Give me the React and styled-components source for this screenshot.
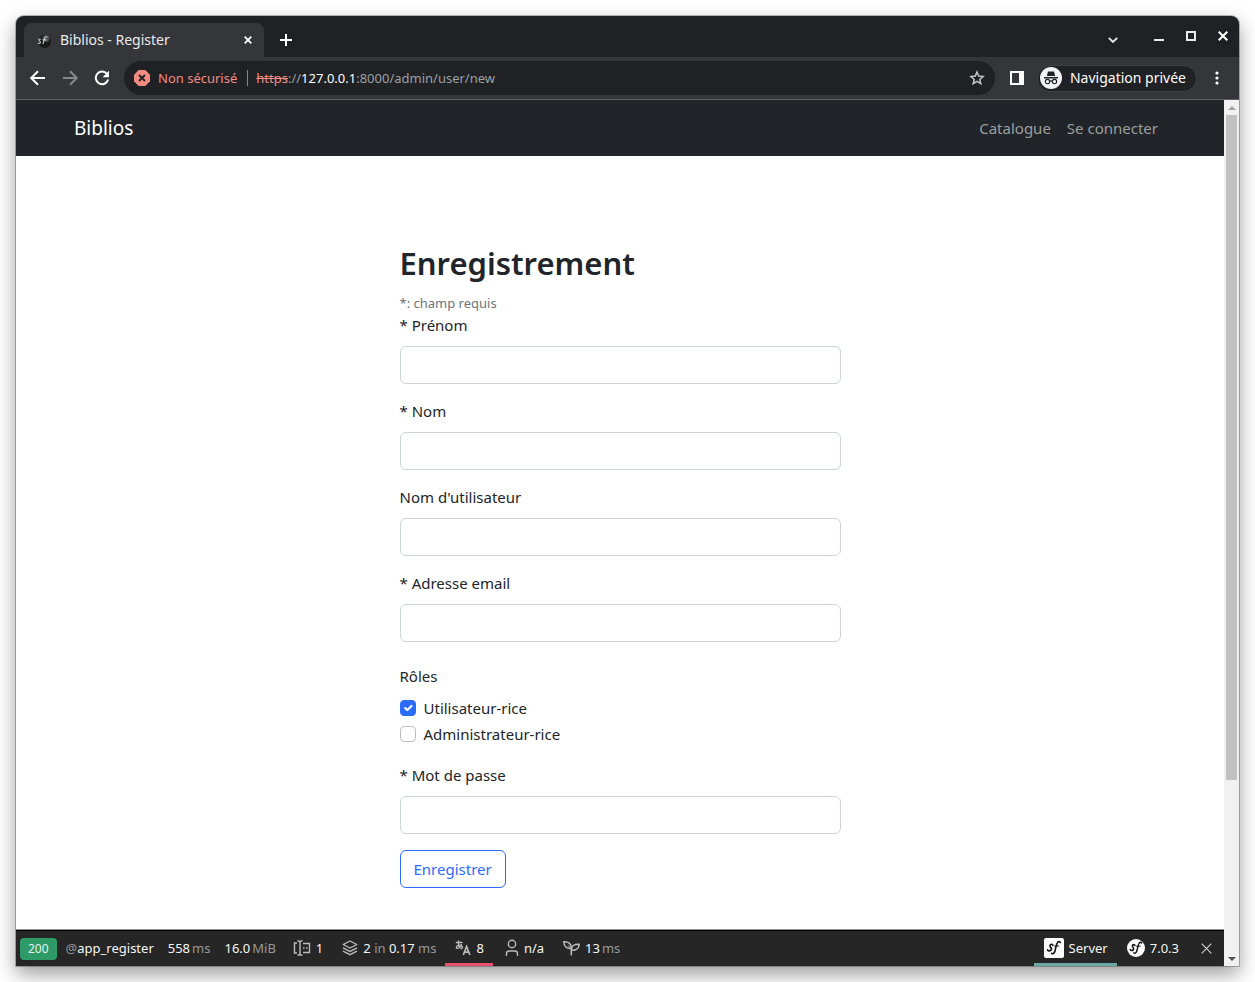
import React, { useState } from "react";
import styled, { createGlobalStyle } from "styled-components";

const fields = [
  { name: "firstname", label: "* Prénom", type: "text" },
  { name: "lastname", label: "* Nom", type: "text" },
  { name: "username", label: "Nom d'utilisateur", type: "text" },
  { name: "email", label: "* Adresse email", type: "email" },
];

const App = () => {
  const [form, setForm] = useState({
    firstname: "",
    lastname: "",
    username: "",
    email: "",
    password: "",
  });
  const [roles, setRoles] = useState({ user: true, admin: false });

  const onChange = (e) => {
    setForm({ ...form, [e.target.name]: e.target.value });
  };

  const onCheck = (e) => {
    setRoles({ ...roles, [e.target.name]: e.target.checked });
  };

  return (
    <>
      <GlobalStyle />
      <Window>
        <TabBar>
          <Tab>
            <Favicon />
            <TabTitle>Biblios - Register</TabTitle>
            <IconBtn aria-label="Fermer l'onglet" $size={16}>
              <CloseIcon size={8} width={1.8} />
            </IconBtn>
          </Tab>
          <IconBtn aria-label="Nouvel onglet" $size={28}>
            <svg width="12" height="12" viewBox="0 0 12 12">
              <path d="M6 0v12M0 6h12" stroke="#fff" strokeWidth="2" />
            </svg>
          </IconBtn>
          <WindowBtns>
            <IconBtn aria-label="Rechercher dans les onglets" $size={16}>
              <svg width="10" height="6" viewBox="0 0 10 6">
                <path d="M.8.8 5 5 9.2.8" fill="none" stroke="#e8eaed" strokeWidth="1.8" />
              </svg>
            </IconBtn>
            <IconBtn aria-label="Réduire" $size={16}>
              <svg width="10" height="10" viewBox="0 0 10 10">
                <path d="M0 9h10" stroke="#e8eaed" strokeWidth="2" />
              </svg>
            </IconBtn>
            <IconBtn aria-label="Agrandir" $size={16}>
              <svg width="10" height="10" viewBox="0 0 10 10">
                <path d="M1 1h8v8H1z" fill="none" stroke="#e8eaed" strokeWidth="2" />
              </svg>
            </IconBtn>
            <IconBtn aria-label="Fermer" $size={16}>
              <CloseIcon size={10} width={2} />
            </IconBtn>
          </WindowBtns>
        </TabBar>

        <Toolbar>
          <IconBtn aria-label="Précédent" $size={32}>
            <ArrowIcon color="#fff" />
          </IconBtn>
          <IconBtn aria-label="Suivant" $size={32}>
            <ArrowIcon color="#86888b" flip />
          </IconBtn>
          <IconBtn aria-label="Actualiser" $size={32}>
            <svg width="16" height="16" viewBox="0 0 16 16">
              <path
                d="M13.3 4.3A6.3 6.3 0 1 0 14.2 9.6"
                fill="none"
                stroke="#fff"
                strokeWidth="2"
              />
              <path d="M15 .8v6.4H8.6z" fill="#fff" />
            </svg>
          </IconBtn>
          <AddressBar>
            <svg width="16" height="16" viewBox="0 0 16 16">
              <path d="M4.7 0h6.6L16 4.7v6.6L11.3 16H4.7L0 11.3V4.7z" fill="#f28b82" />
              <path d="m5 5 6 6M11 5l-6 6" stroke="#202124" strokeWidth="1.8" />
            </svg>
            <Insecure>Non sécurisé</Insecure>
            <Url>
              <s>https</s>://<b>127.0.0.1</b>:8000/admin/user/new
            </Url>
            <IconBtn aria-label="Ajouter aux favoris" $size={16}>
              <svg width="16" height="16" viewBox="0 0 16 16">
                <path
                  d="m8 2 1.7 4.1 4.4.4-3.3 2.9 1 4.3L8 11.4l-3.8 2.3 1-4.3-3.3-2.9 4.4-.4z"
                  fill="none"
                  stroke="#c4c7c9"
                  strokeWidth="1.5"
                />
              </svg>
            </IconBtn>
          </AddressBar>
          <IconBtn aria-label="Panneau latéral" $size={16}>
            <svg width="14" height="14" viewBox="0 0 14 14">
              <path d="M0 0h14v14H0zM2 2v10h7V2z" fill="#fff" fillRule="evenodd" />
            </svg>
          </IconBtn>
          <PrivateBadge>
            <svg width="22" height="22" viewBox="0 0 22 22">
              <circle cx="11" cy="11" r="11" fill="#f1f3f4" />
              <path d="M8 4.5h6l1.2 4.5H6.8zM4 10h14v1.4H4z" fill="#202124" />
              <g fill="none" stroke="#202124" strokeWidth="1.1">
                <circle cx="7.5" cy="14.6" r="2.2" />
                <circle cx="14.5" cy="14.6" r="2.2" />
                <path d="M9.7 14.2q1.3-.7 2.6 0" />
              </g>
            </svg>
            Navigation privée
          </PrivateBadge>
          <IconBtn aria-label="Menu" $size={16}>
            <svg width="4" height="14" viewBox="0 0 4 14">
              <g fill="#fff">
                <circle cx="2" cy="2" r="1.6" />
                <circle cx="2" cy="7" r="1.6" />
                <circle cx="2" cy="12" r="1.6" />
              </g>
            </svg>
          </IconBtn>
        </Toolbar>

        <Viewport>
          <Page>
            <Navbar>
              <NavContainer>
                <Brand href="#">Biblios</Brand>
                <NavLinks>
                  <NavLink href="#">Catalogue</NavLink>
                  <NavLink href="#">Se connecter</NavLink>
                </NavLinks>
              </NavContainer>
            </Navbar>

            <Main>
              <Form onSubmit={(e) => e.preventDefault()}>
                <Title>Enregistrement</Title>
                <Hint>*: champ requis</Hint>
                {fields.map((field) => (
                  <Field key={field.name}>
                    <Label htmlFor={field.name}>{field.label}</Label>
                    <Input
                      id={field.name}
                      name={field.name}
                      type={field.type}
                      value={form[field.name]}
                      onChange={onChange}
                    />
                  </Field>
                ))}
                <Roles>
                  <Legend>Rôles</Legend>
                  <CheckLabel>
                    <Checkbox name="user" checked={roles.user} onChange={onCheck} />
                    Utilisateur-rice
                  </CheckLabel>
                  <CheckLabel>
                    <Checkbox name="admin" checked={roles.admin} onChange={onCheck} />
                    Administrateur-rice
                  </CheckLabel>
                </Roles>
                <Field>
                  <Label htmlFor="password">* Mot de passe</Label>
                  <Input
                    id="password"
                    name="password"
                    type="password"
                    value={form.password}
                    onChange={onChange}
                  />
                </Field>
                <SubmitBtn>Enregistrer</SubmitBtn>
              </Form>
            </Main>

            <DebugBar>
              <Status>200</Status>
              <DebugItem>
                <span><Dim>@</Dim>app_register</span>
              </DebugItem>
              <DebugItem>
                558<Dim>ms</Dim>
              </DebugItem>
              <DebugItem>
                16.0<Dim>MiB</Dim>
              </DebugItem>
              <DebugItem $icon>
                <FormIcon />1
              </DebugItem>
              <DebugItem $icon>
                <LayersIcon />
                <span>2 <Dim>in</Dim> 0.17 <Dim>ms</Dim></span>
              </DebugItem>
              <DebugItem $icon $line="#e8506f">
                <TranslateIcon />8
              </DebugItem>
              <DebugItem $icon>
                <UserIcon />
                n/a
              </DebugItem>
              <DebugItem $icon>
                <TwigIcon />
                <Pair>13<Dim>ms</Dim></Pair>
              </DebugItem>
              <DebugRight>
                <DebugItem $icon $line="#6aa8a5">
                  <SfIcon size={20} square />
                  Server
                </DebugItem>
                <DebugItem $icon>
                  <SfIcon size={18} />
                  7.0.3
                </DebugItem>
                <IconBtn aria-label="Fermer la barre" $size={36}>
                  <CloseIcon size={11} width={1.2} color="#ccc" />
                </IconBtn>
              </DebugRight>
            </DebugBar>
          </Page>

          <Scrollbar aria-hidden="true">
            <ScrollArrow>
              <svg width="8" height="4" viewBox="0 0 8 4">
                <path d="M4 0 8 4H0z" fill="#a3a3a3" />
              </svg>
            </ScrollArrow>
            <Thumb />
            <Track />
            <ScrollArrow>
              <svg width="8" height="4" viewBox="0 0 8 4">
                <path d="M0 0h8L4 4z" fill="#505050" />
              </svg>
            </ScrollArrow>
          </Scrollbar>
        </Viewport>
      </Window>
    </>
  );
};

const CloseIcon = ({ size, width, color = "#fff" }) => (
  <svg width={size} height={size} viewBox={`0 0 ${size} ${size}`}>
    <path
      d={`M.7.7 ${size - 0.7} ${size - 0.7}M${size - 0.7}.7.7 ${size - 0.7}`}
      stroke={color}
      strokeWidth={width}
    />
  </svg>
);

const ArrowIcon = ({ color, flip }) => (
  <svg width="16" height="16" viewBox="0 0 16 16">
    <path
      d={flip ? "M1 8h13M8 1.2 14.8 8 8 14.8" : "M15 8H2M8 1.2 1.2 8 8 14.8"}
      fill="none"
      stroke={color}
      strokeWidth="2"
    />
  </svg>
);

const Favicon = () => (
  <svg width="16" height="16" viewBox="0 0 16 16">
    <circle cx="8.5" cy="9.5" r="6.5" fill="#17181a" />
    <circle cx="10" cy="6.5" r="3.5" fill="#4b4d50" />
    <path
      d="M5 7.3c-1.6-.8-2.8.2-2 1.2.7.9 1.7 1 1.4 2.1-.3 1-1.8.9-2.5.2M6.8 12c1.4-1.5.8-6.3 2.8-7.2 1-.3 1.5.3 1.6.8M6.5 7.9h4"
      fill="none"
      stroke="#c8c8c8"
      strokeWidth="1.1"
    />
  </svg>
);

const SfIcon = ({ size, square }) => (
  <svg width={size} height={size} viewBox="0 0 20 20">
    {square ? (
      <rect width="20" height="20" rx="2" fill="#fff" />
    ) : (
      <circle cx="10" cy="10" r="10" fill="#fff" />
    )}
    <g fill="none" stroke="#111" strokeLinecap="round">
      <path
        d="M8.8 7.3c.1-1.2-1.7-1.4-2.5-.5-.9 1-.4 1.7.4 2.6.9 1 1.2 1.7.3 2.700-1 1-3.200 1-3.400-.3"
        strokeWidth="1.7"
      />
      <path
        d="M7.600 15.400c1.700 1.100 3-.6 3.600-3.200.8-3.200 1.200-6.500 2.500-7.900.9-.9 2.300-.9 2.600.2"
        strokeWidth="1.6"
      />
      <path d="M10.600 8h4.200" strokeWidth="1.1" />
    </g>
  </svg>
);

const FormIcon = () => (
  <svg width="18" height="16" viewBox="0 0 18 16" fill="none" stroke="#bbb" strokeWidth="1.4">
    <path d="M4 3H1.500v10H4M10 3.500h6.500v9H10M4.500.7q2.500 0 2.500 1.800v11q0 1.800-2.500 1.800M9.500.7Q7 .7 7 2.500v11q0 1.800 2.500 1.800" />
    <path d="M10 8h1.500M13 8h1.500" />
  </svg>
);

const LayersIcon = () => (
  <svg width="16" height="16" viewBox="0 0 16 16" fill="none" stroke="#bbb" strokeWidth="1.4">
    <path d="m8 1 6.800 3.500L8 8 1.200 4.500z" strokeLinejoin="round" />
    <path d="M1 7.800 8 11.400l7-3.600M1 11.100l7 3.600 7-3.600" />
  </svg>
);

const TranslateIcon = () => (
  <svg width="16" height="16" viewBox="0 0 16 16" fill="none" stroke="#bbb" strokeWidth="1.3">
    <path d="M.8 2.500h6.700M3.500.5c-.2 3 0 5.500.8 7.700M6.500 4.200C5.800 6.800 4 8.300 2.300 8.400.7 8.300 1 5.400 4.500 5.200c3.700-.1 3.700 3 1 3.600" />
    <path d="m8.300 15 3.300-8.500L14.900 15M9.300 12.200h4.700" strokeWidth="1.7" />
  </svg>
);

const UserIcon = () => (
  <svg width="16" height="18" viewBox="0 0 16 18" fill="none" stroke="#bbb" strokeWidth="1.4">
    <circle cx="9" cy="5" r="3.700" />
    <path d="M3.500 17v-2.300q0-2.700 2.700-2.700h5.600q2.700 0 2.700 2.700V17" />
  </svg>
);

const TwigIcon = () => (
  <svg width="17" height="16" viewBox="0 0 17 16" fill="none" stroke="#bbb" strokeWidth="1.5">
    <path d="M8.300 15.500V9M8.300 8.500C3.500 9 1 6.300.8 1.800c4.800-.3 7.500 1.700 7.500 6.700M8.300 10.300c0-4.500 2.600-6.300 7.900-6.100-.2 4.500-3.200 6.300-7.900 6.100" />
    <path d="m5 5.500 3.200 3.500" strokeWidth="1" />
  </svg>
);

const GlobalStyle = createGlobalStyle`
  * {
    box-sizing: border-box;
  }
  body {
    margin: 0;
    background: #fff;
    color: #212529;
    font-family: "Noto Sans", "Open Sans", sans-serif;
    font-size: 15px;
    line-height: 24px;
  }
  svg {
    display: block;
    flex-shrink: 0;
  }
  button, input {
    font: inherit;
  }
`;

const Window = styled.div`
  display: flex;
  flex-direction: column;
  min-height: calc(100vh - 32px);
  margin: 16px;
  border-radius: 8px 8px 0 0;
  overflow: hidden;
  background: #202124;
  box-shadow: 0 0 0 1px rgba(0, 0, 0, 0.25), 0 8px 20px rgba(0, 0, 0, 0.4);
`;

const IconBtn = styled.button`
  display: flex;
  align-items: center;
  justify-content: center;
  flex-shrink: 0;
  width: ${(props) => props.$size}px;
  height: ${(props) => props.$size}px;
  padding: 0;
  border: none;
  background: none;
  cursor: pointer;
`;

const TabBar = styled.div`
  display: flex;
  align-items: center;
  gap: 8px;
  height: 41px;
  padding: 7px 8px 0;
`;

const Tab = styled.div`
  display: flex;
  align-items: center;
  gap: 8px;
  width: 240px;
  height: 34px;
  padding: 0 8px 0 12px;
  border-radius: 8px 8px 0 0;
  background: #35363a;
`;

const TabTitle = styled.span`
  flex: 1;
  color: #e8eaed;
  font-size: 14px;
`;

const WindowBtns = styled.div`
  display: flex;
  align-items: center;
  gap: 16px;
  margin-left: auto;
  padding-bottom: 8px;

  button:first-child {
    margin: 8px 14px 0 0;
  }
`;

const Toolbar = styled.div`
  display: flex;
  align-items: center;
  height: 43px;
  padding: 0 14px 0 6px;
  border-bottom: 1px solid #5f6064;
  background: #35363a;
`;

const AddressBar = styled.div`
  display: flex;
  flex: 1;
  align-items: center;
  gap: 8px;
  height: 34px;
  margin: 0 14px 0 6px;
  padding: 0 10px;
  border-radius: 17px;
  background: #202124;
  font-size: 13px;
`;

const Insecure = styled.span`
  padding-right: 10px;
  border-right: 1px solid #80868b;
  color: #f28b82;
  line-height: 16px;
`;

const Url = styled.span`
  flex: 1;
  color: #9aa0a6;

  s {
    color: #f28b82;
  }
  b {
    color: #fff;
    font-weight: 400;
  }
`;

const PrivateBadge = styled.div`
  display: flex;
  align-items: center;
  gap: 8px;
  height: 27px;
  margin: 0 12px;
  padding: 0 10px 0 2px;
  border: 1px solid #3f4044;
  border-radius: 14px;
  background: #202124;
  color: #fff;
  font-size: 14px;
`;

const Viewport = styled.div`
  display: flex;
  flex: 1;
`;

const Page = styled.div`
  display: flex;
  flex: 1;
  flex-direction: column;
  background: #fff;
`;

const Navbar = styled.nav`
  padding: 8px 0;
  background: #212529;
`;

const NavContainer = styled.div`
  display: flex;
  align-items: center;
  justify-content: space-between;
  max-width: 1140px;
  height: 40px;
  margin: 0 auto;
  padding: 0 24px;
`;

const Brand = styled.a`
  color: #fff;
  font-size: 19px;
  text-decoration: none;
`;

const NavLinks = styled.div`
  display: flex;
  gap: 16px;
  padding: 0 8px;
`;

const NavLink = styled.a`
  color: #9b9d9f;
  text-decoration: none;
`;

const Main = styled.main`
  flex: 1;
  padding: 89px 16px 40px;
`;

const Form = styled.form`
  max-width: 441px;
  margin: 0 auto;
`;

const Title = styled.h1`
  margin: 0 0 11px;
  font-size: 31px;
  font-weight: 600;
  line-height: 36px;
`;

const Hint = styled.div`
  color: #6c757d;
  font-size: 13px;
  line-height: 22px;
`;

const Field = styled.div`
  margin-bottom: 16px;
`;

const Label = styled.label`
  display: block;
  margin-bottom: 10px;
  line-height: 22px;
`;

const Input = styled.input`
  display: block;
  width: 100%;
  height: 38px;
  padding: 6px 12px;
  border: 1px solid #ced4da;
  border-radius: 6px;
  background: #fff;
  color: #212529;
`;

const Roles = styled.fieldset`
  margin: 0 0 16px;
  padding: 0;
  border: none;
`;

const Legend = styled.legend`
  padding: 6px 0 8px;
`;

const CheckLabel = styled.label`
  display: flex;
  align-items: center;
  gap: 8px;
  margin-bottom: 2px;
`;

const Checkbox = styled.input.attrs({ type: "checkbox" })`
  width: 16px;
  height: 16px;
  margin: 0;
  appearance: none;
  border: 1px solid #bfbfbf;
  border-radius: 4px;
  background: #fff;

  &:checked {
    border-color: #2b6bff;
    background: #2b6bff
      url("data:image/svg+xml,%3csvg xmlns='http://www.w3.org/2000/svg' viewBox='0 0 20 20'%3e%3cpath fill='none' stroke='%23fff' stroke-linecap='round' stroke-linejoin='round' stroke-width='3' d='m6 10 3 3 6-6'/%3e%3c/svg%3e")
      center / contain no-repeat;
  }
`;

const SubmitBtn = styled.button`
  display: block;
  height: 38px;
  padding: 0 13px;
  border: 1px solid #2b6bff;
  border-radius: 6px;
  background: #fff;
  color: #2b6bff;
  cursor: pointer;
`;

const DebugBar = styled.div`
  display: flex;
  align-items: center;
  height: 36px;
  padding-left: 4px;
  border-top: 1px solid #000;
  box-shadow: 0 -1px #8f918f;
  background: #262626;
  color: #f5f5f5;
  font-size: 13px;
`;

const Status = styled.span`
  margin-right: 2px;
  padding: 0 8px;
  border-radius: 4px;
  background: #2e9a68;
  color: #e5f3ec;
  font-size: 12px;
  line-height: 22px;
`;

const DebugItem = styled.div`
  display: flex;
  align-items: center;
  gap: ${(props) => (props.$icon ? 5 : 2)}px;
  height: 34px;
  padding: ${(props) => (props.$icon ? "1px 9px 0 10px" : "1px 7px 0")};
  border-bottom: 3px solid ${(props) => props.$line || "transparent"};
`;

const Pair = styled.span`
  display: flex;
  gap: 2px;
`;

const Dim = styled.span`
  color: #999;
`;

const DebugRight = styled.div`
  display: flex;
  align-items: center;
  margin-left: auto;
`;

const Scrollbar = styled.div`
  display: flex;
  flex-direction: column;
  align-items: center;
  width: 15px;
  background: #f1f1f1;
`;

const ScrollArrow = styled.div`
  display: flex;
  align-items: center;
  justify-content: center;
  height: 15px;
`;

const Thumb = styled.div`
  flex: 35;
  width: 11px;
  background: #c1c1c1;
`;

const Track = styled.div`
  flex: 9;
`;

export default App;
